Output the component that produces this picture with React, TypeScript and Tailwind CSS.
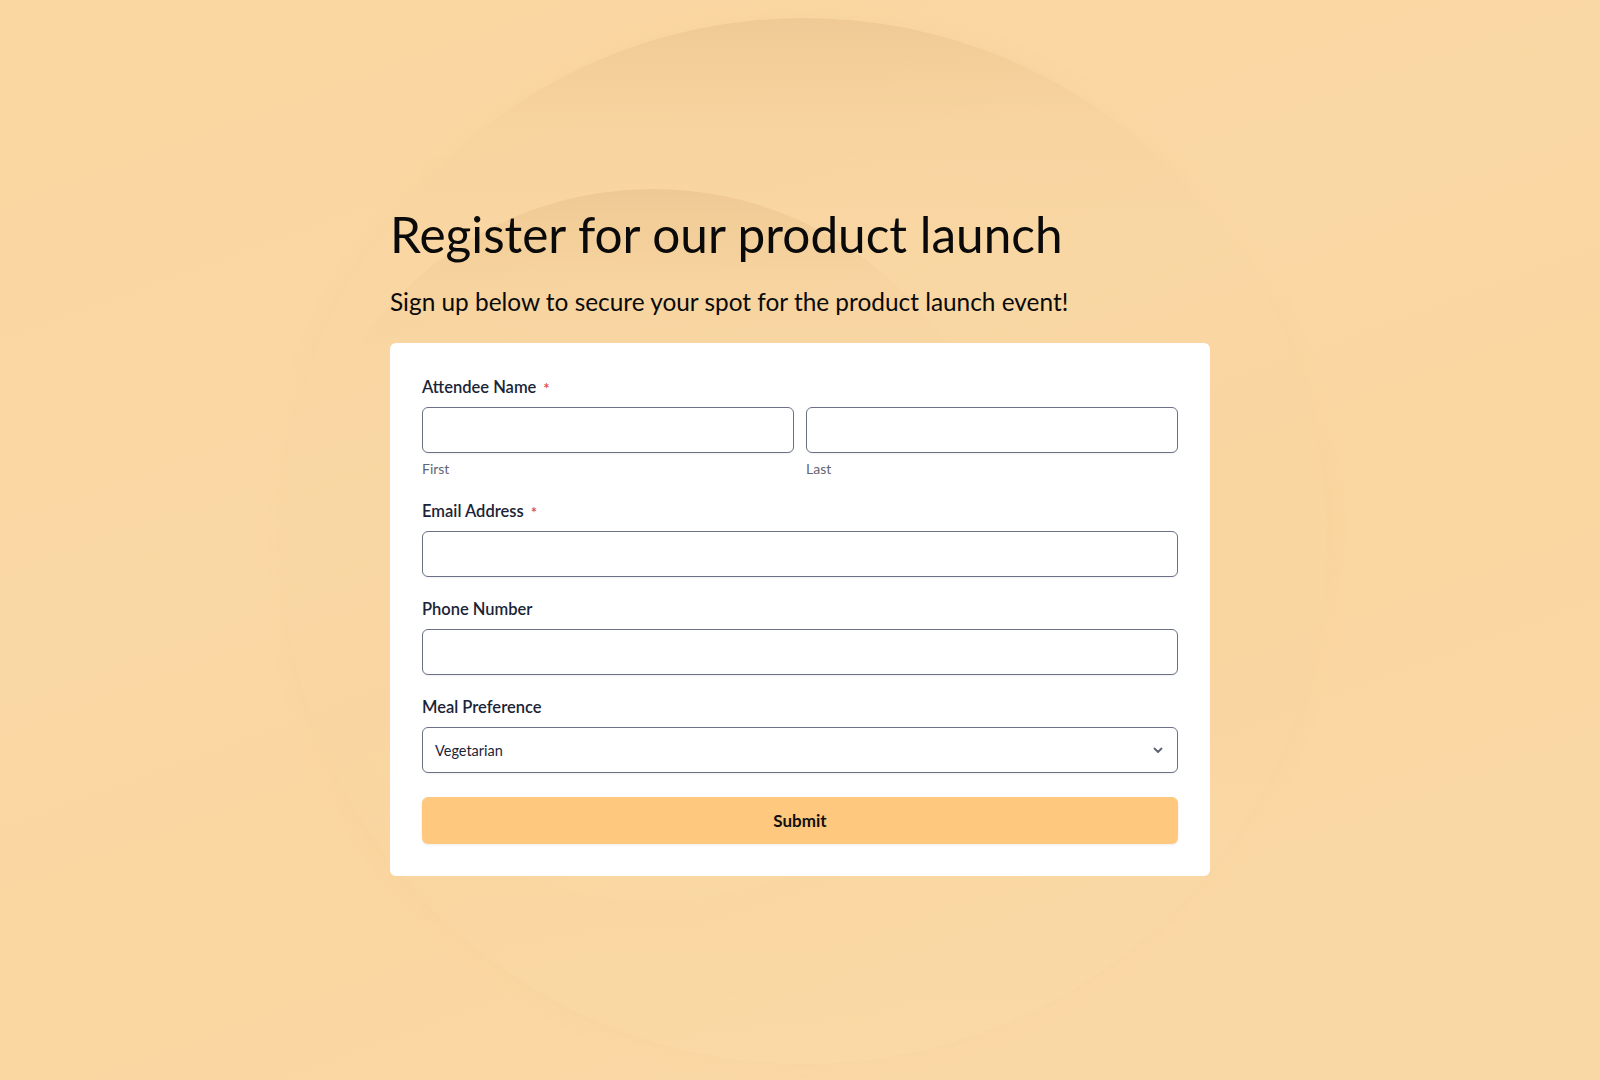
import React from "react";

function Field({ label, required, children }: { label: string; required?: boolean; children: React.ReactNode }) {
  return (
    <div className="flex flex-col">
      <label className="flex items-center text-[16.5px] leading-6 font-semibold text-[#1b2437]">
        {label}
        {required && <span className="ml-[7px] mt-[3px] text-[15px] leading-none text-[#e0433a]">*</span>}
      </label>
      <div className="mt-2">{children}</div>
    </div>
  );
}

const inputCls =
  "block h-[46px] w-full rounded-md border border-[#697284] bg-white px-3 text-[14.5px] text-[#1b2437] shadow-[0_1px_2px_rgba(0,0,0,0.06)] outline-none";

export default function App() {
  return (
    <div className="relative min-h-screen w-full overflow-hidden bg-[#fad6a0] font-['Lato',sans-serif]">
      {/* decorative background */}
      <div className="pointer-events-none absolute inset-0">
        <div className="absolute left-[281px] top-[18px] h-[1046px] w-[1046px] rounded-full bg-[linear-gradient(180deg,#efc993_0%,#f3cd96_4%,#f7d29c_10%,#f9d59f_22%,#f9d59f_70%,#fad7a1_100%)] shadow-[0_0_20px_rgba(240,200,140,0.2)]" />
        <div className="absolute left-[297px] top-[189px] h-[712px] w-[712px] rounded-full bg-[linear-gradient(180deg,#eec791_0%,#f2cc95_5%,#f6d19b_12%,#f9d59f_25%,#f9d59f_75%,#fad7a1_100%)]" />
        <div className="absolute inset-0 bg-[linear-gradient(160deg,rgba(255,255,255,0)_0%,rgba(255,255,255,0.05)_40%,rgba(255,255,255,0)_60%,rgba(255,255,255,0.06)_85%)]" />
      </div>

      <div className="relative mx-auto w-[820px] pt-[205px]">
        <h1 className="text-[49.5px] font-normal leading-[58px] text-[#0a0a0a]">Register for our product launch</h1>
        <p className="mt-[23px] text-[24.4px] leading-8 text-[#0a0a0a]">
          Sign up below to secure your spot for the product launch event!
        </p>

        <div className="mt-[25px] rounded-md bg-white px-8 pb-8 pt-8">
          <Field label="Attendee Name" required>
            <div className="grid grid-cols-2 gap-3">
              <div>
                <input className={inputCls} />
                <div className="mt-1.5 text-[14px] leading-5 text-[#5f6673]">First</div>
              </div>
              <div>
                <input className={inputCls} />
                <div className="mt-1.5 text-[14px] leading-5 text-[#5f6673]">Last</div>
              </div>
            </div>
          </Field>

          <div className="mt-5">
            <Field label="Email Address" required>
              <input className={inputCls} />
            </Field>
          </div>

          <div className="mt-5">
            <Field label="Phone Number">
              <input className={inputCls} />
            </Field>
          </div>

          <div className="mt-5">
            <Field label="Meal Preference">
              <div className="relative">
                <div className={inputCls + " flex items-center pt-[2px]"}>Vegetarian</div>
                <svg
                  className="absolute right-[14px] top-1/2 h-3 w-3 -translate-y-1/2 text-[#5b6270]"
                  viewBox="0 0 12 12"
                  fill="none"
                  stroke="currentColor"
                  strokeWidth="1.8"
                  strokeLinecap="round"
                  strokeLinejoin="round"
                >
                  <path d="M2.5 4.5 6 8l3.5-3.5" />
                </svg>
              </div>
            </Field>
          </div>

          <button className="mt-6 flex h-[47px] w-full items-center justify-center rounded-md bg-[#fec87e] text-[17px] font-bold text-[#111] shadow-[0_1px_3px_rgba(0,0,0,0.08)]">
            Submit
          </button>
        </div>
      </div>
    </div>
  );
}
